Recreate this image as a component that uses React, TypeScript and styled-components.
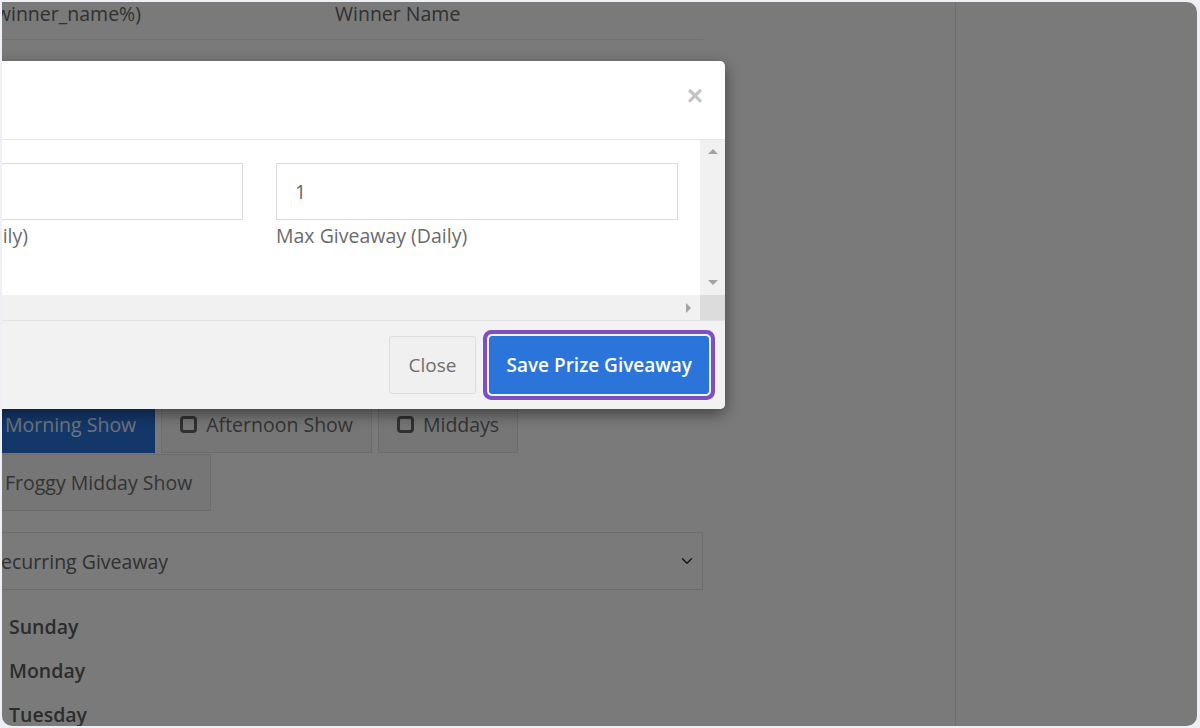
import React from "react";
import styled, { createGlobalStyle } from "styled-components";
import { ChevronDown } from "lucide-react";

const GlobalStyle = createGlobalStyle`
  html, body {
    margin: 0;
    padding: 0;
    background: #eef0f5;
  }
  body {
    font-family: "Open Sans", "Liberation Sans", sans-serif;
    overflow: hidden;
  }
  * { box-sizing: border-box; }
`;

const Frame = styled.div`
  position: relative;
  margin: 2px 3px 2px 2px;
  height: 724px;
  background: #fff;
  border-radius: 0 10px 10px 10px;
  overflow: hidden;
`;

const Layout = styled.div`
  display: flex;
  height: 100%;
`;

const Main = styled.div`
  width: 953px;
  flex-shrink: 0;
`;

const Column = styled.div`
  margin-left: -42px;
  width: 743px;
  display: flex;
  flex-direction: column;
`;

const Sidebar = styled.div`
  flex: 1;
  border-left: 1px solid #e6e6e6;
`;

const TableRow = styled.div`
  display: flex;
  height: 38px;
  align-items: center;
  border-bottom: 1px solid #ececec;
  font-size: 19.5px;
  color: #666;
`;

const Cell = styled.div<{ $w: number; $pad?: number }>`
  width: ${(p) => p.$w}px;
  padding-left: ${(p) => p.$pad ?? 0}px;
  white-space: nowrap;
  padding-bottom: 14px;
`;

const Spacer = styled.div<{ $h: number }>`
  height: ${(p) => p.$h}px;
`;

const ShowGroup = styled.div`
  display: flex;
  flex-wrap: wrap;
  column-gap: 6px;
  row-gap: 1px;
`;

const ShowButton = styled.div<{ $active?: boolean }>`
  display: flex;
  align-items: center;
  gap: 9px;
  height: 57px;
  padding: 0 18px;
  font-size: 19.5px;
  background: ${(p) => (p.$active ? "#2874db" : "#f6f6f6")};
  color: ${(p) => (p.$active ? "#e8f0ff" : "#6e6e6e")};
  border: 1px solid ${(p) => (p.$active ? "#2874db" : "#e2e2e2")};
  white-space: nowrap;
`;

const Box = styled.span<{ $checked?: boolean }>`
  width: 17px;
  height: 17px;
  border: 3px solid ${(p) => (p.$checked ? "#fff" : "#666")};
  border-radius: 4px;
  background: ${(p) => (p.$checked ? "#fff" : "transparent")};
`;

const Select = styled.div`
  margin-top: 21px;
  height: 58px;
  border: 1px solid #e4e4e4;
  display: flex;
  align-items: center;
  justify-content: space-between;
  padding: 0 6px 0 28px;
  font-size: 19.5px;
  color: #666;
`;

const DayList = styled.div`
  margin-top: 15px;
  padding-left: 49px;
  display: flex;
  flex-direction: column;
`;

const Day = styled.div`
  height: 44px;
  line-height: 44px;
  font-size: 19.5px;
  font-weight: 600;
  color: #5c5c5c;
`;

const Overlay = styled.div`
  position: absolute;
  inset: 0;
  background: rgba(0, 0, 0, 0.52);
`;

const Modal = styled.div`
  position: absolute;
  top: 59px;
  left: -191px;
  width: 914px;
  background: #fff;
  border-radius: 0 5px 5px 0;
  box-shadow: 0 5px 15px rgba(0, 0, 0, 0.45);
  overflow: hidden;
`;

const ModalHeader = styled.div`
  height: 79px;
  border-bottom: 1px solid #e5e5e5;
  display: flex;
  align-items: center;
  justify-content: flex-end;
  padding: 0 22px 8px;
`;

const CloseX = styled.span`
  font-size: 28px;
  line-height: 1;
  font-weight: 600;
  color: #c4c4c4;
  font-family: "Liberation Sans", Arial, sans-serif;
`;

const BodyGrid = styled.div`
  display: grid;
  grid-template-columns: 1fr 25px;
  grid-template-rows: 155px 25px;
  border-bottom: 1px solid #e5e5e5;
`;

const ScrollContent = styled.div`
  display: flex;
  gap: 33px;
  padding: 23px 0 0 30px;
  overflow: hidden;
`;

const Field = styled.div`
  width: 402px;
  flex-shrink: 0;
`;

const Input = styled.div`
  height: 57px;
  border: 1px solid #dcdcdc;
  display: flex;
  align-items: center;
  padding: 0 18px;
  font-size: 19.5px;
  color: #666;
`;

const Label = styled.div`
  margin-top: 3px;
  font-size: 19.5px;
  line-height: 26px;
  color: #6b6b6b;
  white-space: nowrap;
`;

const ScrollTrack = styled.div<{ $vertical?: boolean }>`
  background: #f1f1f1;
  display: flex;
  flex-direction: ${(p) => (p.$vertical ? "column" : "row")};
  align-items: center;
  justify-content: ${(p) => (p.$vertical ? "space-between" : "flex-end")};
  padding: ${(p) => (p.$vertical ? "9px 0 10px" : "0 9px 0 0")};
`;

const ScrollCorner = styled.div`
  background: #dcdcdc;
`;

const Arrow = styled.span<{ $dir: "up" | "down" | "right" }>`
  width: 0;
  height: 0;
  ${(p) =>
    p.$dir === "up"
      ? "border-left: 5px solid transparent; border-right: 5px solid transparent; border-bottom: 5px solid #a3a3a3;"
      : p.$dir === "down"
        ? "border-left: 5px solid transparent; border-right: 5px solid transparent; border-top: 5px solid #a3a3a3;"
        : "border-top: 5px solid transparent; border-bottom: 5px solid transparent; border-left: 5px solid #a3a3a3;"}
`;

const Footer = styled.div`
  height: 88px;
  background: #f2f2f2;
  display: flex;
  align-items: center;
  justify-content: flex-end;
  gap: 13px;
  padding: 0 16px 0 0;
`;

const FooterButton = styled.button<{ $primary?: boolean }>`
  height: 58px;
  padding: 0 ${(p) => (p.$primary ? 16 : 19)}px;
  font-family: "Open Sans", "Liberation Sans", sans-serif;
  font-size: 19px;
  font-weight: ${(p) => (p.$primary ? 600 : 400)};
  border-radius: 3px;
  border: 1px solid ${(p) => (p.$primary ? "#2a72d6" : "#dcdcdc")};
  background: ${(p) => (p.$primary ? "#2b75da" : "#f0f0f0")};
  color: ${(p) => (p.$primary ? "#fff" : "#6e6e6e")};
  box-shadow: ${(p) =>
    p.$primary ? "0 0 0 2px #f2f2f2, 0 0 0 6px #7e4fc3" : "none"};
`;

const shows = [
  { name: "Morning Show", checked: true },
  { name: "Afternoon Show" },
  { name: "Middays" },
  { name: "Froggy Midday Show" },
];

export default function App() {
  return (
    <>
      <GlobalStyle />
      <Frame>
        <Layout>
          <Main>
            <Column>
              <TableRow>
                <Cell $w={375} $pad={14}>
                  (%winner_name%)
                </Cell>
                <Cell $w={300}>Winner Name</Cell>
              </TableRow>
              <Spacer $h={356} />
              <ShowGroup>
                {shows.map((s) => (
                  <ShowButton key={s.name} $active={s.checked}>
                    <Box $checked={s.checked} />
                    {s.name}
                  </ShowButton>
                ))}
              </ShowGroup>
              <Select>
                <span>Recurring Giveaway</span>
                <ChevronDown size={18} color="#333" strokeWidth={2} />
              </Select>
              <DayList>
                <Day>Sunday</Day>
                <Day>Monday</Day>
                <Day>Tuesday</Day>
              </DayList>
            </Column>
          </Main>
          <Sidebar />
        </Layout>
        <Overlay />
        <Modal>
          <ModalHeader>
            <CloseX>×</CloseX>
          </ModalHeader>
          <BodyGrid>
            <ScrollContent>
              <Field>
                <Input />
                <Label>Min Giveaway (Daily)</Label>
              </Field>
              <Field>
                <Input>1</Input>
                <Label>Max Giveaway (Daily)</Label>
              </Field>
            </ScrollContent>
            <ScrollTrack $vertical>
              <Arrow $dir="up" />
              <Arrow $dir="down" />
            </ScrollTrack>
            <ScrollTrack>
              <Arrow $dir="right" />
            </ScrollTrack>
            <ScrollCorner />
          </BodyGrid>
          <Footer>
            <FooterButton>Close</FooterButton>
            <FooterButton $primary>Save Prize Giveaway</FooterButton>
          </Footer>
        </Modal>
      </Frame>
    </>
  );
}
